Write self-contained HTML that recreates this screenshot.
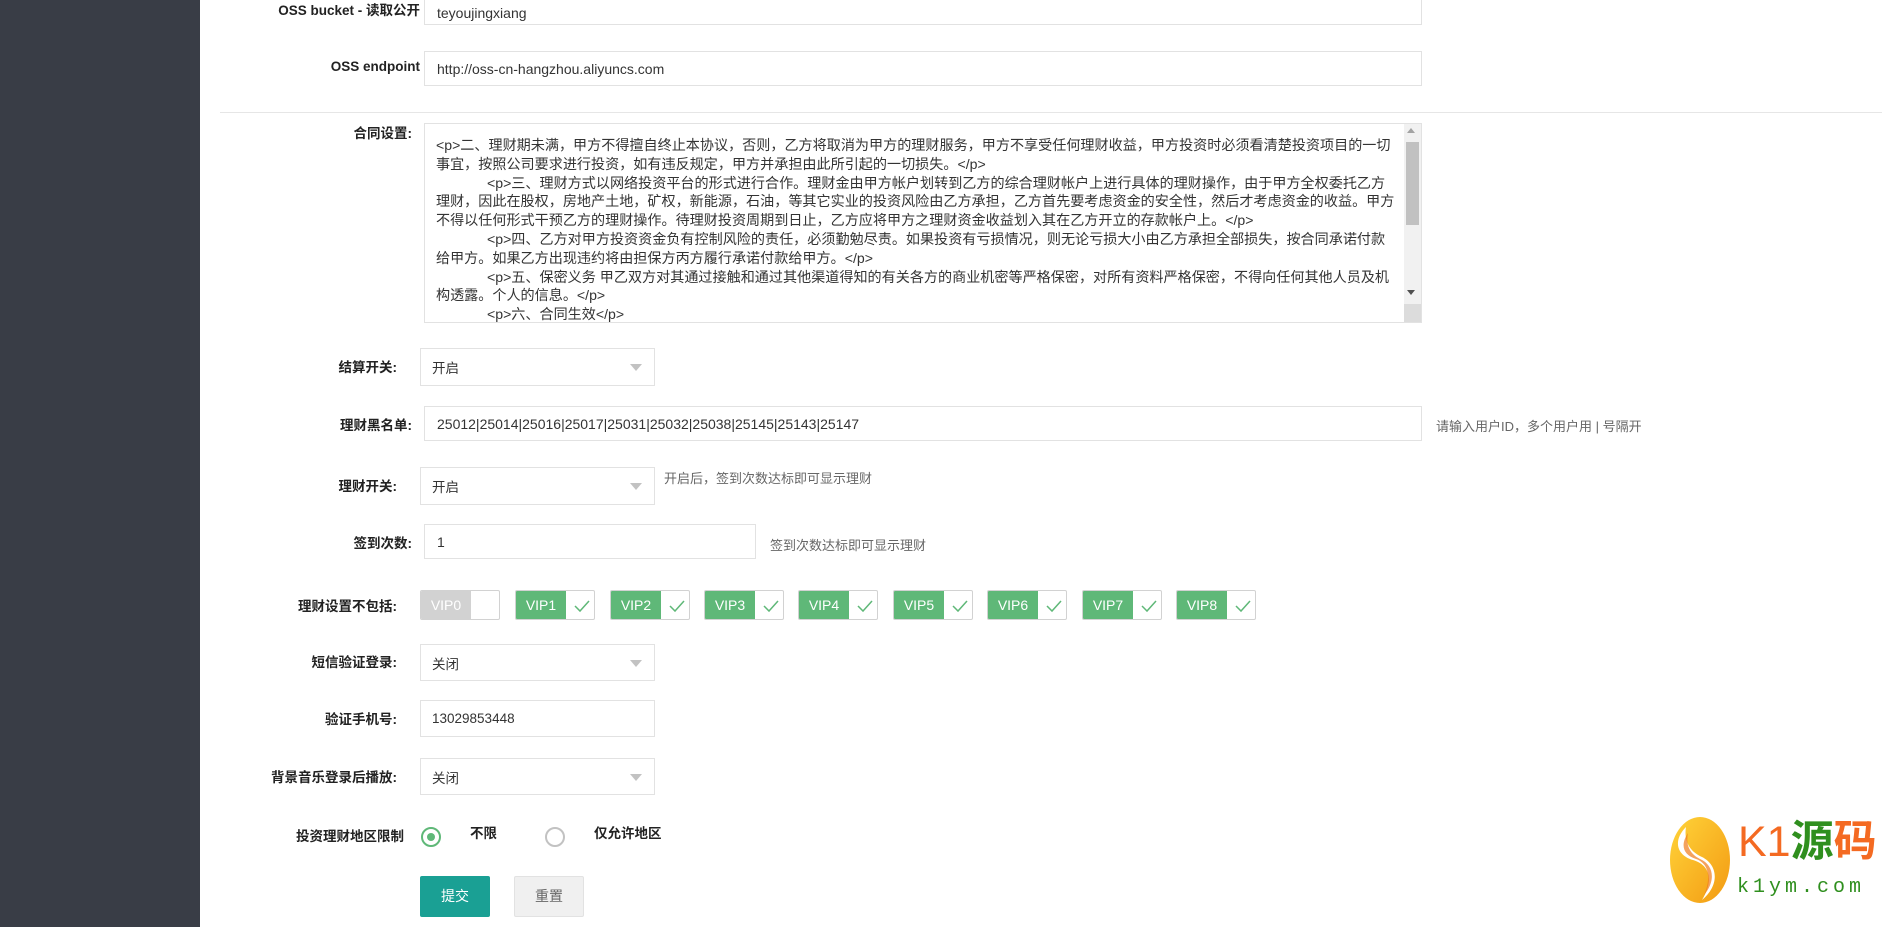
<!DOCTYPE html>
<html><head><meta charset="utf-8"><style>
*{box-sizing:border-box;margin:0;padding:0}
body{width:1899px;height:927px;overflow:hidden;background:#fff;font-family:"Liberation Sans","Noto Sans CJK SC",sans-serif;color:#333;position:relative}
.sb{position:absolute;left:0;top:0;width:200px;height:927px;background:#393d46}
.a{position:absolute}
.lbl{position:absolute;font-size:13.5px;font-weight:bold;color:#222;text-align:right;white-space:nowrap;margin-top:-2px}
.inp{position:absolute;border:1px solid #e2e2e2;background:#fff;font-size:14px;color:#333;padding-left:12px;display:flex;align-items:center;white-space:nowrap}
.sel{position:absolute;border:1px solid #e2e2e2;background:#fff;font-size:13.5px;color:#333;padding-left:11px;display:flex;align-items:center}
.sel:after{content:"";position:absolute;right:12px;top:50%;margin-top:-3px;border:6px solid transparent;border-top:7px solid #c2c2c2;border-bottom:0}
.help{position:absolute;font-size:13px;color:#666;white-space:nowrap}
.vip{position:absolute;top:590px;width:80px;height:30px;border:1px solid #d2d2d2;border-radius:2px;background:#fff;overflow:hidden}
.vip span{position:absolute;left:0;top:0;width:50px;height:30px;background:#5fb878;color:#fff;font-size:14px;line-height:29px;text-align:center}
.vip.off span{background:#d2d2d2}
.vip svg{position:absolute;left:58px;top:8px}
.ta{position:absolute;left:424px;top:123px;width:998px;height:200px;border:1px solid #e2e2e2;overflow:hidden}
.ta .t{position:absolute;left:11px;top:12px;width:960px;font-size:14.1px;line-height:18.8px;color:#333;white-space:nowrap}
.ind{display:inline-block;width:51px}
.scr{position:absolute;right:0;top:0;width:17px;height:198px;background:#f1f1f1}
</style></head><body>
<div class="sb"></div>

<div class="lbl" style="right:1479px;top:1px">OSS bucket - 读取公开</div>
<div class="inp" style="left:424px;top:-10px;width:998px;height:35px;padding-top:10px">teyoujingxiang</div>

<div class="lbl" style="right:1479px;top:61px">OSS endpoint</div>
<div class="inp" style="left:424px;top:51px;width:998px;height:35px">http://oss-cn-hangzhou.aliyuncs.com</div>

<div class="a" style="left:220px;top:112px;width:1662px;height:1px;background:#e6e6e6"></div>

<div class="lbl" style="right:1487px;top:124px">合同设置:</div>
<div class="ta"><div class="t">
&lt;p&gt;二、理财期未满，甲方不得擅自终止本协议，否则，乙方将取消为甲方的理财服务，甲方不享受任何理财收益，甲方投资时必须看清楚投资项目的一切<br>
事宜，按照公司要求进行投资，如有违反规定，甲方并承担由此所引起的一切损失。&lt;/p&gt;<br>
<span class="ind"></span>&lt;p&gt;三、理财方式以网络投资平台的形式进行合作。理财金由甲方帐户划转到乙方的综合理财帐户上进行具体的理财操作，由于甲方全权委托乙方<br>
理财，因此在股权，房地产土地，矿权，新能源，石油，等其它实业的投资风险由乙方承担，乙方首先要考虑资金的安全性，然后才考虑资金的收益。甲方<br>
不得以任何形式干预乙方的理财操作。待理财投资周期到日止，乙方应将甲方之理财资金收益划入其在乙方开立的存款帐户上。&lt;/p&gt;<br>
<span class="ind"></span>&lt;p&gt;四、乙方对甲方投资资金负有控制风险的责任，必须勤勉尽责。如果投资有亏损情况，则无论亏损大小由乙方承担全部损失，按合同承诺付款<br>
给甲方。如果乙方出现违约将由担保方丙方履行承诺付款给甲方。&lt;/p&gt;<br>
<span class="ind"></span>&lt;p&gt;五、保密义务 甲乙双方对其通过接触和通过其他渠道得知的有关各方的商业机密等严格保密，对所有资料严格保密，不得向任何其他人员及机<br>
构透露。个人的信息。&lt;/p&gt;<br>
<span class="ind"></span>&lt;p&gt;六、合同生效&lt;/p&gt;
</div>
<div class="scr"><div class="a" style="left:3px;top:4px;border:4px solid transparent;border-bottom:5px solid #a3a3a3;border-top:0"></div><div class="a" style="left:2px;top:18px;width:13px;height:83px;background:#c1c1c1"></div><div class="a" style="left:3px;top:166px;border:4px solid transparent;border-top:5px solid #505050;border-bottom:0"></div><div class="a" style="left:0;top:180px;width:17px;height:18px;background:#dcdcdc"></div></div>
</div>

<div class="lbl" style="right:1502px;top:358px">结算开关:</div>
<div class="sel" style="left:420px;top:348px;width:235px;height:38px">开启</div>

<div class="lbl" style="right:1487px;top:416px">理财黑名单:</div>
<div class="inp" style="left:424px;top:406px;width:998px;height:35px">25012|25014|25016|25017|25031|25032|25038|25145|25143|25147</div>
<div class="help" style="left:1436px;top:416px">请输入用户ID，多个用户用 | 号隔开</div>

<div class="lbl" style="right:1502px;top:477px">理财开关:</div>
<div class="sel" style="left:420px;top:467px;width:235px;height:38px">开启</div>
<div class="help" style="left:664px;top:468px">开启后，签到次数达标即可显示理财</div>

<div class="lbl" style="right:1487px;top:534px">签到次数:</div>
<div class="inp" style="left:424px;top:524px;width:332px;height:35px">1</div>
<div class="help" style="left:770px;top:535px">签到次数达标即可显示理财</div>

<div class="lbl" style="right:1502px;top:597px">理财设置不包括:</div>
<div class="vip off" style="left:420px"><span>VIP0</span></div>
<div class="vip" style="left:515px"><span>VIP1</span><svg width="16" height="14"><path d="M1 7l5 5 9-10" fill="none" stroke="#5fb878" stroke-width="1.5"/></svg></div>
<div class="vip" style="left:610px"><span>VIP2</span><svg width="16" height="14"><path d="M1 7l5 5 9-10" fill="none" stroke="#5fb878" stroke-width="1.5"/></svg></div>
<div class="vip" style="left:704px"><span>VIP3</span><svg width="16" height="14"><path d="M1 7l5 5 9-10" fill="none" stroke="#5fb878" stroke-width="1.5"/></svg></div>
<div class="vip" style="left:798px"><span>VIP4</span><svg width="16" height="14"><path d="M1 7l5 5 9-10" fill="none" stroke="#5fb878" stroke-width="1.5"/></svg></div>
<div class="vip" style="left:893px"><span>VIP5</span><svg width="16" height="14"><path d="M1 7l5 5 9-10" fill="none" stroke="#5fb878" stroke-width="1.5"/></svg></div>
<div class="vip" style="left:987px"><span>VIP6</span><svg width="16" height="14"><path d="M1 7l5 5 9-10" fill="none" stroke="#5fb878" stroke-width="1.5"/></svg></div>
<div class="vip" style="left:1082px"><span>VIP7</span><svg width="16" height="14"><path d="M1 7l5 5 9-10" fill="none" stroke="#5fb878" stroke-width="1.5"/></svg></div>
<div class="vip" style="left:1176px"><span>VIP8</span><svg width="16" height="14"><path d="M1 7l5 5 9-10" fill="none" stroke="#5fb878" stroke-width="1.5"/></svg></div>

<div class="lbl" style="right:1502px;top:653px">短信验证登录:</div>
<div class="sel" style="left:420px;top:644px;width:235px;height:37px">关闭</div>

<div class="lbl" style="right:1502px;top:710px">验证手机号:</div>
<div class="sel" style="left:420px;top:700px;width:235px;height:37px;">13029853448</div>
<div class="a" style="left:630px;top:710px;width:20px;height:20px;background:#fff"></div>

<div class="lbl" style="right:1502px;top:768px">背景音乐登录后播放:</div>
<div class="sel" style="left:420px;top:758px;width:235px;height:37px">关闭</div>

<div class="lbl" style="right:1495px;top:827px">投资理财地区限制</div>
<div class="a" style="left:421px;top:827px;width:20px;height:20px;border:2px solid #5fb878;border-radius:50%"><div class="a" style="left:4px;top:4px;width:8px;height:8px;border-radius:50%;background:#5fb878"></div></div>
<div class="lbl" style="left:470px;top:824px;text-align:left">不限</div>
<div class="a" style="left:545px;top:827px;width:20px;height:20px;border:2px solid #c2c2c2;border-radius:50%"></div>
<div class="lbl" style="left:594px;top:824px;text-align:left">仅允许地区</div>

<div class="a" style="left:420px;top:876px;width:70px;height:41px;background:#1aa094;border-radius:2px;color:#fff;font-size:14px;line-height:41px;text-align:center">提交</div>
<div class="a" style="left:514px;top:876px;width:70px;height:41px;background:#f0f0f0;border:1px solid #e2e2e2;border-radius:2px;color:#666;font-size:14px;line-height:39px;text-align:center">重置</div>

<svg class="a" style="left:1668px;top:815px" width="64" height="90" viewBox="0 0 64 90">
<defs><linearGradient id="g" x1="0" y1="0" x2="1" y2="1"><stop offset="0" stop-color="#ffd43a"/><stop offset="1" stop-color="#f39a12"/></linearGradient></defs>
<ellipse cx="32" cy="45" rx="30" ry="43" fill="url(#g)"/>
<path d="M18 12 C5 25 8 40 25 45 C42 50 46 65 34 85 C52 70 50 50 34 42 C20 36 16 24 18 12Z" fill="#fff"/>
<path d="M20 18 C12 30 15 40 28 44 C40 48 44 62 36 80 C48 66 46 50 32 44 C20 38 18 28 20 18Z" fill="#f07a1a" opacity=".7"/>
</svg>
<div class="a" style="left:1738px;top:814px;font-size:43px;line-height:56px;font-family:'Liberation Sans','Noto Sans CJK SC',sans-serif;white-space:nowrap"><span style="color:#f46a22">K1</span><span style="color:#2f8f1e;font-weight:bold">源</span><span style="color:#f46a22;font-weight:bold">码</span></div>
<div class="a" style="left:1737px;top:876px;font-size:20px;letter-spacing:4px;color:#2f8f1e;font-family:'Liberation Mono',monospace;white-space:nowrap">k1ym.com</div>
</body></html>
